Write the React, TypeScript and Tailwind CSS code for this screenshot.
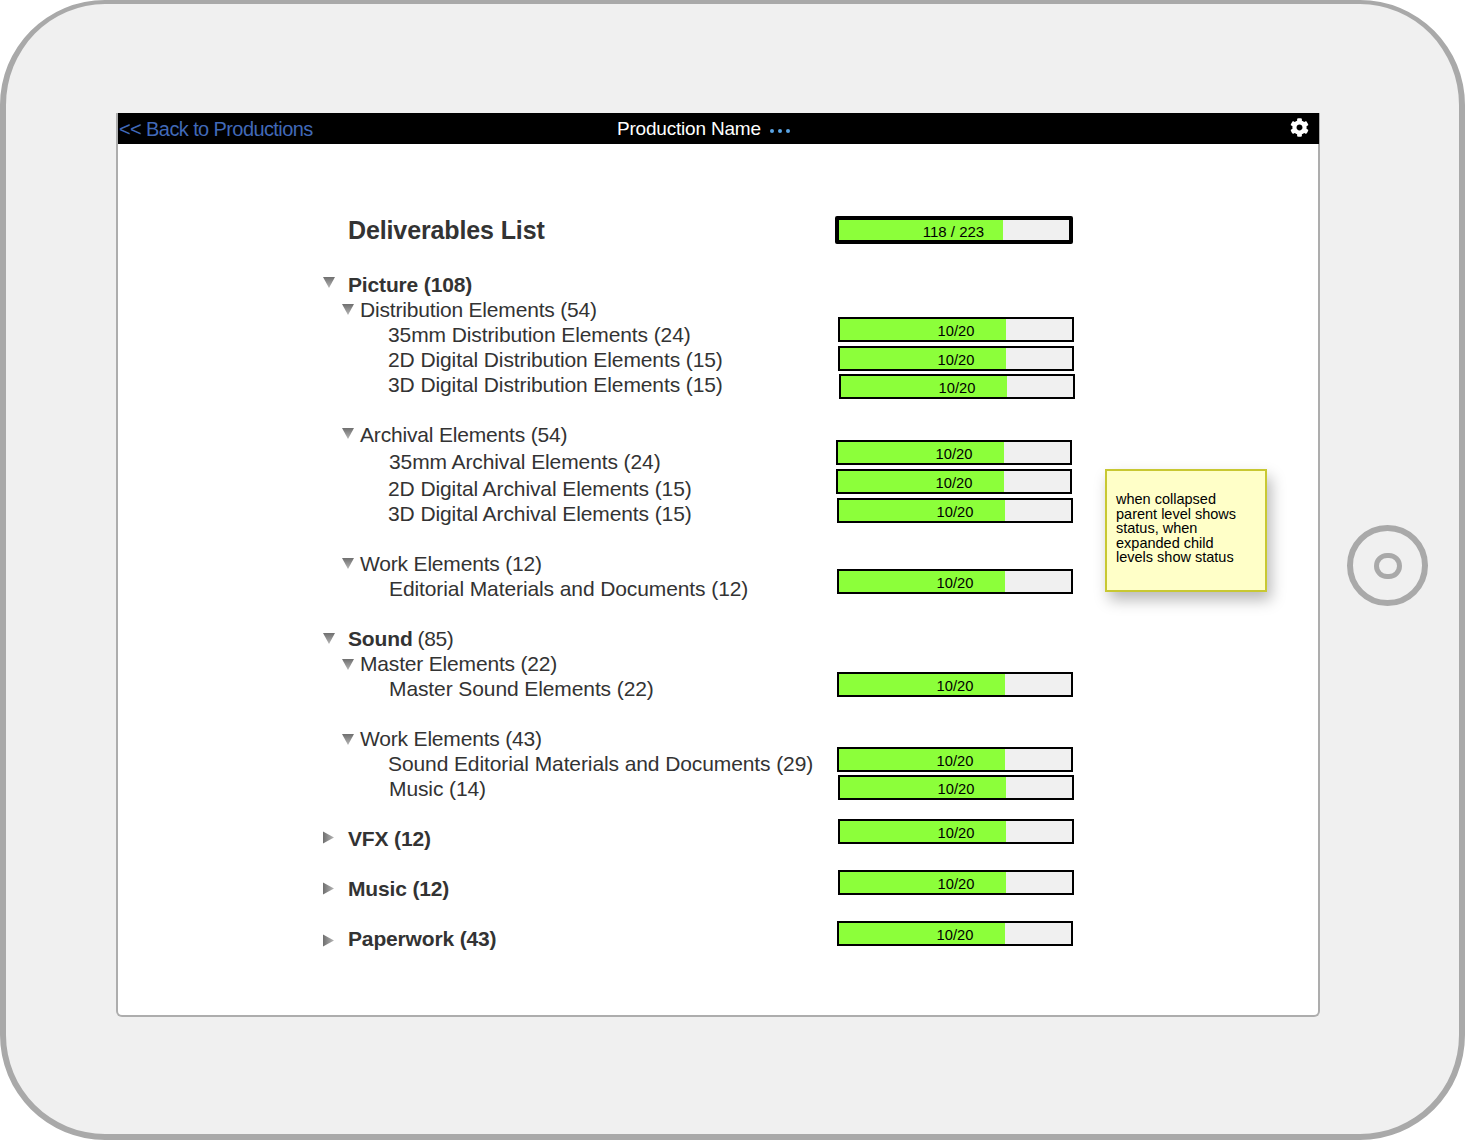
import React from 'react';
import { FaCog } from 'react-icons/fa';

type RowKind = 'group' | 'section' | 'item';

interface ListRow {
  kind: RowKind;
  label: string;
  count?: string;
  open?: boolean;
  className?: string;
  triangleClass?: string;
}

interface StatusBar {
  label: string;
  className: string;
}

const rows: ListRow[] = [
  { kind: 'group', label: 'Picture (108)', open: true, triangleClass: '-translate-y-[2px]' },
  { kind: 'section', label: 'Distribution Elements (54)', open: true },
  { kind: 'item', label: '35mm Distribution Elements (24)' },
  { kind: 'item', label: '2D Digital Distribution Elements (15)' },
  { kind: 'item', label: '3D Digital Distribution Elements (15)' },
  { kind: 'section', label: 'Archival Elements (54)', open: true, className: 'mt-[25px]', triangleClass: '-translate-y-[1px]' },
  { kind: 'item', label: '35mm Archival Elements (24)', className: 'mt-[2px] ml-[1px]' },
  { kind: 'item', label: '2D Digital Archival Elements (15)', className: 'mt-[2px]' },
  { kind: 'item', label: '3D Digital Archival Elements (15)' },
  { kind: 'section', label: 'Work Elements (12)', open: true, className: 'mt-[25px]' },
  { kind: 'item', label: 'Editorial Materials and Documents (12)', className: 'ml-[1px]' },
  { kind: 'group', label: 'Sound', count: '(85)', open: true, className: 'mt-[25px]' },
  { kind: 'section', label: 'Master Elements (22)', open: true, triangleClass: 'translate-y-[1px]' },
  { kind: 'item', label: 'Master Sound Elements (22)', className: 'ml-[1px]' },
  { kind: 'section', label: 'Work Elements (43)', open: true, className: 'mt-[25px]', triangleClass: 'translate-y-[1px]' },
  { kind: 'item', label: 'Sound Editorial Materials and Documents (29)' },
  { kind: 'item', label: 'Music (14)', className: 'ml-[1px]' },
  { kind: 'group', label: 'VFX (12)', className: 'mt-[25px]', triangleClass: '-translate-y-[1px]' },
  { kind: 'group', label: 'Music (12)', className: 'mt-[25px]' },
  { kind: 'group', label: 'Paperwork (43)', className: 'mt-[25px]', triangleClass: 'translate-y-[2px]' },
];

const bars: StatusBar[] = [
  { label: '10/20', className: 'mt-[73px] ml-[3px]' },
  { label: '10/20', className: 'mt-[4px] ml-[3px]' },
  { label: '10/20', className: 'mt-[3px] ml-[4px]' },
  { label: '10/20', className: 'mt-[41px] ml-[1px]' },
  { label: '10/20', className: 'mt-[4px] ml-[1px]' },
  { label: '10/20', className: 'mt-[4px] ml-[2px]' },
  { label: '10/20', className: 'mt-[46px] ml-[2px]' },
  { label: '10/20', className: 'mt-[78px] ml-[2px]' },
  { label: '10/20', className: 'mt-[50px] ml-[2px]' },
  { label: '10/20', className: 'mt-[3px] ml-[3px]' },
  { label: '10/20', className: 'mt-[19px] ml-[3px]' },
  { label: '10/20', className: 'mt-[26px] ml-[3px]' },
  { label: '10/20', className: 'mt-[26px] ml-[2px]' },
];

const Triangle: React.FC<{ open?: boolean; id: string; className?: string }> = ({ open, id, className }) => (
  <svg width="14" height="13" viewBox="0 0 14 13" className={`shrink-0 ${className ?? ''}`}>
    <defs>
      <linearGradient id={id} x1="0" y1="0" x2={open ? '0' : '1'} y2={open ? '1' : '0'}>
        <stop offset="0" stopColor="#6f6f6f" />
        <stop offset="1" stopColor="#b5b5b5" />
      </linearGradient>
    </defs>
    {open ? (
      <polygon points="1,1 13,1 7,12" fill={`url(#${id})`} />
    ) : (
      <polygon points="1,0.5 12,6.5 1,12.5" fill={`url(#${id})`} />
    )}
  </svg>
);

const Row: React.FC<{ row: ListRow; index: number }> = ({ row, index }) => {
  if (row.kind === 'item') {
    return <div className={`h-[25px] pl-[66px] leading-[25px] tracking-[-0.1px] whitespace-nowrap ${row.className ?? ''}`}>{row.label}</div>;
  }

  if (row.kind === 'section') {
    return (
      <div className={`flex h-[25px] items-center pl-[19px] leading-[25px] tracking-[-0.18px] whitespace-nowrap ${row.className ?? ''}`}>
        <Triangle open={row.open} id={`tri-${index}`} className={row.triangleClass} />
        <span className="ml-[5px]">{row.label}</span>
      </div>
    );
  }

  return (
    <div className={`flex h-[25px] items-center leading-[25px] tracking-[-0.15px] whitespace-nowrap ${row.className ?? ''}`}>
      <Triangle open={row.open} id={`tri-${index}`} className={row.triangleClass} />
      <span className="ml-[12px] font-bold">{row.label}</span>
      {row.count && <span className="ml-[5px] tracking-[-0.4px]">{row.count}</span>}
    </div>
  );
};

const Bar: React.FC<{ bar: StatusBar }> = ({ bar }) => (
  <div className={`relative flex h-[25px] w-[236px] border-2 border-black bg-[#f0f0f0] ${bar.className}`}>
    <div className="h-full w-[166px] bg-[#8cff3a]" />
    <span className="absolute inset-x-0 top-[3px] text-center text-[14.7px] leading-[18px] text-black">{bar.label}</span>
  </div>
);

export default function App() {
  return (
    <div className="h-[1142px] bg-white font-['Liberation_Sans',Arial,sans-serif]">
      <div className="flex h-[1140px] items-start rounded-[105px] border-x-[6px] border-t-[4px] border-b-[6px] border-[#a9a9a9] bg-[#f0f0f0] pt-[109px]">
        <div className="ml-[110px] flex h-[904px] w-[1204px] flex-col rounded-b-[6px] border-x-2 border-b-2 border-[#adadad] bg-white">
          <header className="relative -mr-[1px] flex h-[31px] items-center justify-between bg-black">
            <a className="pl-[1px] text-[20px] tracking-[-0.6px] text-[#4169b8]">&lt;&lt; Back to Productions</a>
            <div className="absolute left-[499px] top-[4px] flex items-center">
              <span className="text-[19px] leading-[24px] tracking-[-0.2px] text-white">Production Name</span>
              <span className="ml-[9px] mt-[3px] flex gap-[4px]">
                <i className="size-[4px] rounded-full bg-[#5aa5e6]" />
                <i className="size-[4px] rounded-full bg-[#5aa5e6]" />
                <i className="size-[4px] rounded-full bg-[#5aa5e6]" />
              </span>
            </div>
            <FaCog className="mb-[2px] mr-[10px] text-[19px] text-white" />
          </header>

          <main className="relative flex pl-[204px] pt-[71px] text-[21px] text-[#333333]">
            <div className="w-[513px]">
              <h1 className="mb-[27px] h-[30px] pl-[26px] text-[25px] font-bold leading-[30px] tracking-[-0.12px]">Deliverables List</h1>
              {rows.map((row, index) => (
                <Row key={index} row={row} index={index} />
              ))}
            </div>

            <div className="w-[240px] pt-[1px]">
              <div className="relative flex h-[28px] w-[238px] rounded-[2px] border-4 border-black bg-[#f0f0f0]">
                <div className="h-full w-[164px] bg-[#8cff3a]" />
                <span className="absolute inset-x-0 top-[2px] pr-[1px] text-center text-[15px] leading-[20px] text-black">118 / 223</span>
              </div>
              {bars.map((bar, index) => (
                <Bar key={index} bar={bar} />
              ))}
            </div>

            <aside className="absolute left-[987px] top-[325px] h-[123px] w-[162px] border-2 border-[#c8c832] bg-[#ffffc8] pl-[9px] pt-[21px] text-[14.5px] leading-[14.5px] text-black shadow-[4px_8px_14px_rgba(0,0,0,0.28)]">
              when collapsed
              <br />
              parent level shows
              <br />
              status, when
              <br />
              expanded child
              <br />
              levels show status
            </aside>
          </main>
        </div>

        <div className="ml-[27px] mt-[412px] flex size-[81px] items-center justify-center rounded-full border-[6px] border-[#a9a9a9]">
          <div className="h-[26px] w-[28px] rounded-full border-[5px] border-[#a9a9a9]" />
        </div>
      </div>
    </div>
  );
}
